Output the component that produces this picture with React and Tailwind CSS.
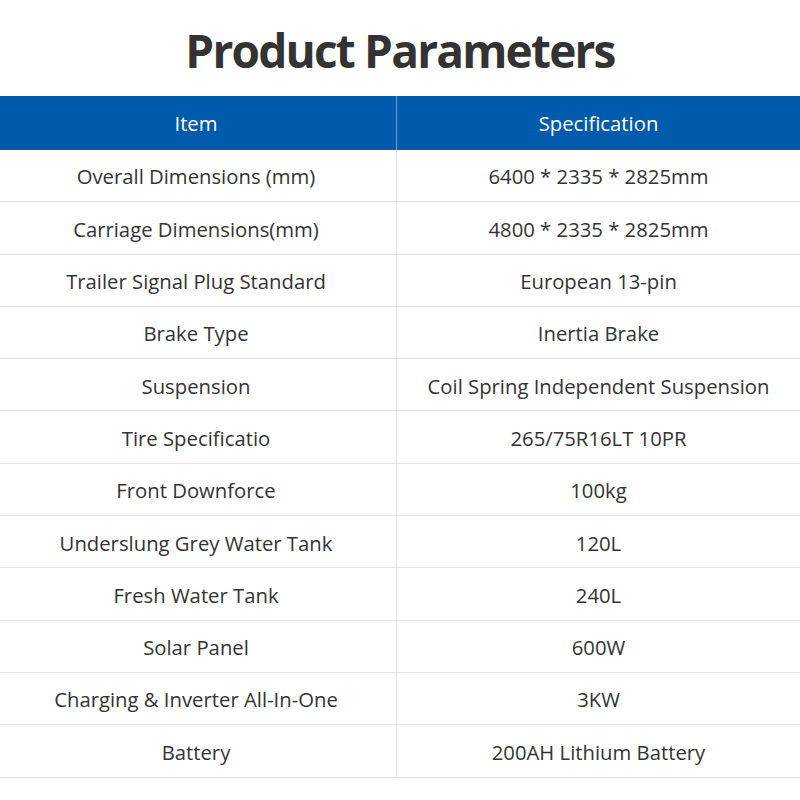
const rows = [
  ['Overall Dimensions (mm)', '6400 * 2335 * 2825mm'],
  ['Carriage Dimensions(mm)', '4800 * 2335 * 2825mm'],
  ['Trailer Signal Plug Standard', 'European 13-pin'],
  ['Brake Type', 'Inertia Brake'],
  ['Suspension', 'Coil Spring Independent Suspension'],
  ['Tire Specificatio', '265/75R16LT 10PR'],
  ['Front Downforce', '100kg'],
  ['Underslung Grey Water Tank', '120L'],
  ['Fresh Water Tank', '240L'],
  ['Solar Panel', '600W'],
  ['Charging & Inverter All-In-One', '3KW'],
  ['Battery', '200AH Lithium Battery'],
];

export default function App() {
  return (
    <div className="w-[800px] h-[800px] bg-white font-['Open_Sans',sans-serif] text-[#333]">
      <h1 className="h-[96px] flex items-center justify-center text-[46px] tracking-[-1.8px] font-bold text-[#333] pt-1">
        Product Parameters
      </h1>
      <div className="flex h-[54px] bg-[#005bac] text-white text-[20.3px]">
        <div className="w-[397px] flex items-center justify-center border-r border-[#6f9fd0] pr-1">Item</div>
        <div className="flex-1 flex items-center justify-center">Specification</div>
      </div>
      {rows.map(([item, spec]) => (
        <div key={item} className="flex h-[52.3px] border-b border-[#e3e3e3] text-[20.3px]">
          <div className="w-[397px] flex items-center justify-center border-r border-[#e3e3e3] pt-0.5 pr-1">{item}</div>
          <div className="flex-1 flex items-center justify-center pt-0.5">{spec}</div>
        </div>
      ))}
    </div>
  );
}
